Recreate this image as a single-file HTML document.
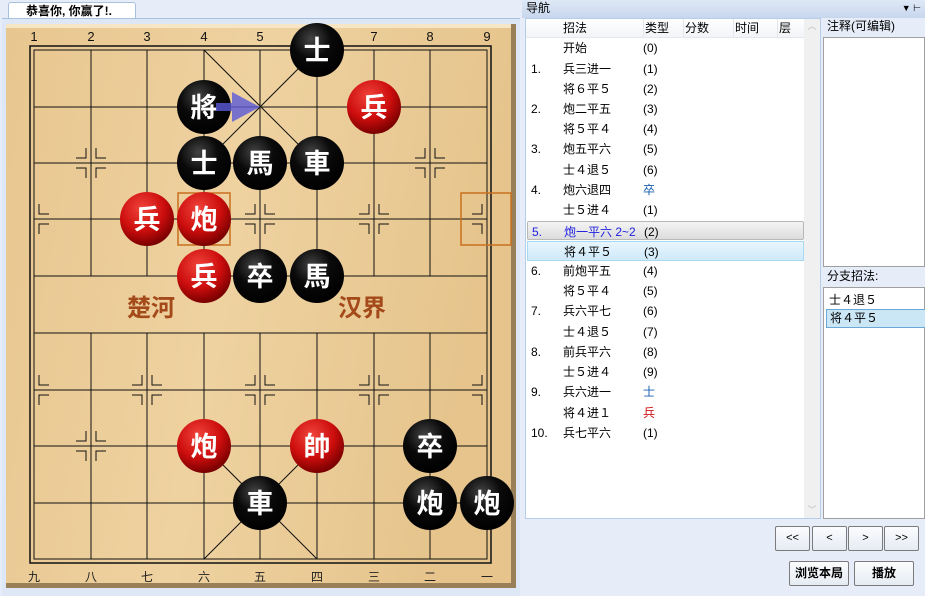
<!DOCTYPE html>
<html><head><meta charset="utf-8"><style>
*{margin:0;padding:0;box-sizing:border-box}
body{width:925px;height:596px;overflow:hidden;background:#e6edf8;font-family:"Liberation Sans","Noto Sans CJK SC",sans-serif;font-size:12px;color:#000;position:relative}
.abs{position:absolute}
.tab{left:8px;top:2px;width:128px;height:17px;background:#fff;border:1px solid #a9c1e0;border-bottom:none;border-radius:3px 3px 0 0;font-weight:bold;font-size:12px;padding-left:17px;line-height:16px}
.nav{left:522px;top:0;width:403px;height:18px;background:linear-gradient(#dfe8f6,#c8d7ee);padding-left:4px;line-height:17px}
.list{left:525px;top:18px;width:296px;height:501px;background:#fff;border:1px solid #b5cde8}
.hdr{position:absolute;top:0;height:19px;line-height:19px}
.row{position:absolute;left:0;width:278px;height:20px;line-height:20px}
.row span{position:absolute}
.btn{background:linear-gradient(#fbfcfe,#e6ebf3);border:1px solid #7b7b7b;border-radius:2px;text-align:center;font-size:11px}
</style></head><body>
<div class="abs tab">恭喜你, 你赢了!.</div>
<div class="abs" style="left:2px;top:18px;width:518px;height:578px;background:#dde7f5;border-top:1px solid #a9c1e0"></div>
<svg class="abs" style="left:0;top:0" width="520" height="596">
<defs>
<linearGradient id="wood" x1="0" x2="1" y1="0" y2="0.2">
<stop offset="0" stop-color="#e8c68f"/><stop offset="0.5" stop-color="#eed2a0"/><stop offset="1" stop-color="#e6c48c"/></linearGradient>
<radialGradient id="rp" cx="0.4" cy="0.3" r="0.7"><stop offset="0" stop-color="#f0443a"/><stop offset="0.6" stop-color="#cc0d0d"/><stop offset="1" stop-color="#7a0000"/></radialGradient>
<radialGradient id="bp" cx="0.4" cy="0.3" r="0.7"><stop offset="0" stop-color="#444"/><stop offset="0.5" stop-color="#0a0a0a"/><stop offset="1" stop-color="#000"/></radialGradient>
</defs>
<rect x="6" y="24" width="510" height="564" fill="#9a8058"/>
<rect x="6" y="24" width="505" height="559" fill="url(#wood)"/>
<rect x="6" y="24" width="505" height="4" fill="#f6e6c6"/>
<g stroke="#111" stroke-width="1" fill="none">
<rect x="30" y="46" width="461" height="517" stroke-width="1.5"/>
<rect x="34" y="50" width="453" height="509"/>
<g id="h">
<line x1="34" y1="107" x2="487" y2="107"/><line x1="34" y1="163" x2="487" y2="163"/>
<line x1="34" y1="219" x2="487" y2="219"/><line x1="34" y1="276" x2="487" y2="276"/>
<line x1="34" y1="333" x2="487" y2="333"/><line x1="34" y1="390" x2="487" y2="390"/>
<line x1="34" y1="446" x2="487" y2="446"/><line x1="34" y1="503" x2="487" y2="503"/>
</g>
<path d="M91 50V276M147 50V276M204 50V276M260 50V276M317 50V276M374 50V276M430 50V276
M91 333V559M147 333V559M204 333V559M260 333V559M317 333V559M374 333V559M430 333V559"/>
<path d="M204 50L317 163M317 50L204 163M204 446L317 559M317 446L204 559"/>
<path stroke-width="1" d="
M86 148v10h-10M96 148v10h10M86 178v-10h-10M96 178v-10h10
M425 148v10h-10M435 148v10h10M425 178v-10h-10M435 178v-10h10
M39 204v10h10M39 234v-10h10
M142 204v10h-10M152 204v10h10M142 234v-10h-10M152 234v-10h10
M255 204v10h-10M265 204v10h10M255 234v-10h-10M265 234v-10h10
M369 204v10h-10M379 204v10h10M369 234v-10h-10M379 234v-10h10
M482 204v10h-10M482 234v-10h-10
M39 375v10h10M39 405v-10h10
M142 375v10h-10M152 375v10h10M142 405v-10h-10M152 405v-10h10
M255 375v10h-10M265 375v10h10M255 405v-10h-10M265 405v-10h10
M369 375v10h-10M379 375v10h10M369 405v-10h-10M379 405v-10h10
M482 375v10h-10M482 405v-10h-10
M86 431v10h-10M96 431v10h10M86 461v-10h-10M96 461v-10h10"/>
</g>
<g font-family="Liberation Sans,sans-serif" font-size="13" fill="#111" text-anchor="middle">
<text x="34" y="41">1</text><text x="91" y="41">2</text><text x="147" y="41">3</text><text x="204" y="41">4</text><text x="260" y="41">5</text><text x="317" y="41">6</text><text x="374" y="41">7</text><text x="430" y="41">8</text><text x="487" y="41">9</text>
</g>
<g font-family="Noto Sans CJK SC,sans-serif" font-size="12" fill="#222" text-anchor="middle">
<text x="34" y="581">九</text><text x="91" y="581">八</text><text x="147" y="581">七</text><text x="204" y="581">六</text><text x="260" y="581">五</text><text x="317" y="581">四</text><text x="374" y="581">三</text><text x="430" y="581">二</text><text x="487" y="581">一</text>
</g>
<g font-family="Noto Sans CJK SC,sans-serif" font-size="24" font-weight="bold" fill="#a44a1a">
<text x="127" y="316">楚河</text><text x="338" y="316">汉界</text>
</g>
<rect x="178" y="193" width="52" height="52" fill="none" stroke="#c8701e" stroke-width="1.5"/>
<rect x="461" y="193" width="50" height="52" fill="none" stroke="#c8701e" stroke-width="1.5"/>
<g font-family="Noto Sans CJK SC,sans-serif" font-size="27" font-weight="bold" fill="#fff" text-anchor="middle">
<circle cx="317" cy="50" r="27" fill="url(#bp)"/><text x="317" y="60">士</text>
<circle cx="204" cy="107" r="27" fill="url(#bp)"/><text x="204" y="117">將</text>
<circle cx="374" cy="107" r="27" fill="url(#rp)"/><text x="374" y="117">兵</text>
<circle cx="204" cy="163" r="27" fill="url(#bp)"/><text x="204" y="173">士</text>
<circle cx="260" cy="163" r="27" fill="url(#bp)"/><text x="260" y="173">馬</text>
<circle cx="317" cy="163" r="27" fill="url(#bp)"/><text x="317" y="173">車</text>
<circle cx="147" cy="219" r="27" fill="url(#rp)"/><text x="147" y="229">兵</text>
<circle cx="204" cy="219" r="27" fill="url(#rp)"/><text x="204" y="229">炮</text>
<circle cx="204" cy="276" r="27" fill="url(#rp)"/><text x="204" y="286">兵</text>
<circle cx="260" cy="276" r="27" fill="url(#bp)"/><text x="260" y="286">卒</text>
<circle cx="317" cy="276" r="27" fill="url(#bp)"/><text x="317" y="286">馬</text>
<circle cx="204" cy="446" r="27" fill="url(#rp)"/><text x="204" y="456">炮</text>
<circle cx="317" cy="446" r="27" fill="url(#rp)"/><text x="317" y="456">帥</text>
<circle cx="430" cy="446" r="27" fill="url(#bp)"/><text x="430" y="456">卒</text>
<circle cx="260" cy="503" r="27" fill="url(#bp)"/><text x="260" y="513">車</text>
<circle cx="430" cy="503" r="27" fill="url(#bp)"/><text x="430" y="513">炮</text>
<circle cx="487" cy="503" r="27" fill="url(#bp)"/><text x="487" y="513">炮</text>
</g>
<path d="M216 103h16v-11l28 15-28 15v-11h-16z" fill="#5a5ad8" opacity="0.8"/>
</svg>

<div class="abs nav">导航<span style="position:absolute;right:4px;top:0;font-size:9px">▼ ⊢</span></div>
<div class="abs list">
<div class="hdr" style="left:0;width:278px;background:linear-gradient(#fff,#f2f4f8);border-bottom:1px solid #e4e8ee"></div>
<div class="hdr" style="left:37px">招法</div>
<div class="hdr" style="left:117px;border-left:1px solid #e4e8ee;padding-left:1px">类型</div>
<div class="hdr" style="left:157px;border-left:1px solid #e4e8ee;padding-left:1px">分数</div>
<div class="hdr" style="left:207px;border-left:1px solid #e4e8ee;padding-left:1px">时间</div>
<div class="hdr" style="left:251px;border-left:1px solid #e4e8ee;padding-left:1px">层</div>
<div style="position:absolute;left:278px;top:0;width:16px;height:499px;background:#f0f0f0;color:#bbb;font-size:9px;text-align:center">︿<div style="position:absolute;bottom:2px;width:16px">﹀</div></div>
<div class="row" style="top:19px"><span style="left:37px">开始</span><span style="left:117px">(0)</span></div>
<div class="row" style="top:40px"><span style="left:5px">1.</span><span style="left:37px">兵三进一</span><span style="left:117px">(1)</span></div>
<div class="row" style="top:60px"><span style="left:37px">将６平５</span><span style="left:117px">(2)</span></div>
<div class="row" style="top:80px"><span style="left:5px">2.</span><span style="left:37px">炮二平五</span><span style="left:117px">(3)</span></div>
<div class="row" style="top:100px"><span style="left:37px">将５平４</span><span style="left:117px">(4)</span></div>
<div class="row" style="top:120px"><span style="left:5px">3.</span><span style="left:37px">炮五平六</span><span style="left:117px">(5)</span></div>
<div class="row" style="top:141px"><span style="left:37px">士４退５</span><span style="left:117px">(6)</span></div>
<div class="row" style="top:161px"><span style="left:5px">4.</span><span style="left:37px">炮六退四</span><span style="left:117px;color:#1a5fb0">卒</span></div>
<div class="row" style="top:181px"><span style="left:37px">士５进４</span><span style="left:117px">(1)</span></div>
<div class="row" style="top:202px;left:1px;width:277px;height:19px;background:linear-gradient(#f4f4f4,#dcdcdc);border:1px solid #b8b8b8;border-radius:2px;color:#2020e0"><span style="left:4px">5.</span><span style="left:36px">炮一平六 2~2</span><span style="left:116px;color:#000">(2)</span></div>
<div class="row" style="top:222px;left:1px;width:277px;background:linear-gradient(#e8f5fd,#cfeafa);border:1px solid #a8d8f2"><span style="left:36px">将４平５</span><span style="left:116px">(3)</span></div>
<div class="row" style="top:242px"><span style="left:5px">6.</span><span style="left:37px">前炮平五</span><span style="left:117px">(4)</span></div>
<div class="row" style="top:262px"><span style="left:37px">将５平４</span><span style="left:117px">(5)</span></div>
<div class="row" style="top:282px"><span style="left:5px">7.</span><span style="left:37px">兵六平七</span><span style="left:117px">(6)</span></div>
<div class="row" style="top:303px"><span style="left:37px">士４退５</span><span style="left:117px">(7)</span></div>
<div class="row" style="top:323px"><span style="left:5px">8.</span><span style="left:37px">前兵平六</span><span style="left:117px">(8)</span></div>
<div class="row" style="top:343px"><span style="left:37px">士５进４</span><span style="left:117px">(9)</span></div>
<div class="row" style="top:363px"><span style="left:5px">9.</span><span style="left:37px">兵六进一</span><span style="left:117px;color:#1a5fb0">士</span></div>
<div class="row" style="top:384px"><span style="left:37px">将４进１</span><span style="left:117px;color:#d01010">兵</span></div>
<div class="row" style="top:404px"><span style="left:5px">10.</span><span style="left:37px">兵七平六</span><span style="left:117px">(1)</span></div>
</div>
<div class="abs" style="left:823px;top:18px;width:102px;height:19px;line-height:17px;padding-left:4px;background:#e6edf8">注释(可编辑)</div>
<div class="abs" style="left:823px;top:37px;width:102px;height:230px;background:#fff;border:1px solid #a0a0a0"></div>
<div class="abs" style="left:823px;top:267px;width:102px;height:20px;line-height:18px;padding-left:4px;background:#e6edf8">分支招法:</div>
<div class="abs" style="left:823px;top:287px;width:102px;height:232px;background:#fff;border:1px solid #a0a0a0">
<div style="position:absolute;left:5px;top:3px;line-height:18px">士４退５</div>
<div style="position:absolute;left:2px;top:21px;width:100px;height:19px;line-height:17px;padding-left:3px;background:#cbe7f6;border:1px solid #6aa8d8">将４平５</div>
</div>
<div class="abs btn" style="left:775px;top:526px;width:35px;height:25px;line-height:23px">&lt;&lt;</div>
<div class="abs btn" style="left:812px;top:526px;width:35px;height:25px;line-height:23px">&lt;</div>
<div class="abs btn" style="left:848px;top:526px;width:35px;height:25px;line-height:23px">&gt;</div>
<div class="abs btn" style="left:884px;top:526px;width:35px;height:25px;line-height:23px">&gt;&gt;</div>
<div class="abs btn" style="left:789px;top:561px;width:60px;height:25px;line-height:23px;font-size:12px;font-weight:bold">浏览本局</div>
<div class="abs btn" style="left:854px;top:561px;width:60px;height:25px;line-height:23px;font-size:12px;font-weight:bold">播放</div>
</body></html>
